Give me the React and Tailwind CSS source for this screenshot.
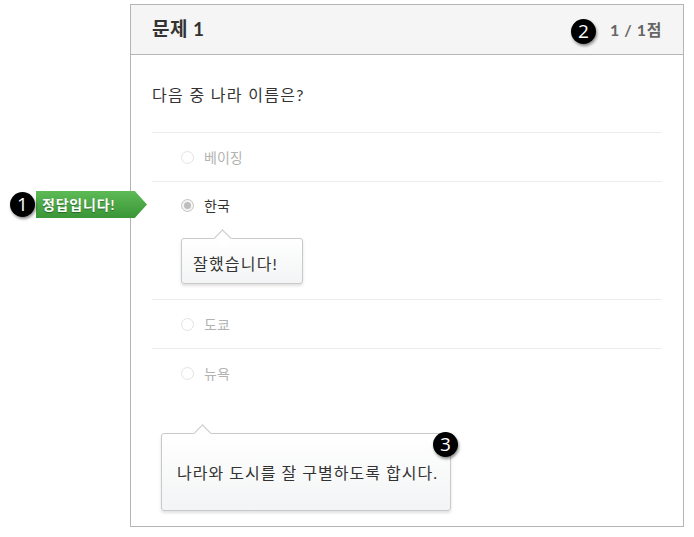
import React from 'react';

const FONT = "font-['Lato','Noto_Sans_CJK_KR',sans-serif]";

const Badge = ({ n, className }) => (
    <div
        className={`absolute flex h-[25px] w-[25px] items-center justify-center rounded-full bg-black text-[19px] leading-none text-white shadow-[1px_2px_3px_rgba(0,0,0,0.45)] font-['Open_Sans',sans-serif] ${className}`}
    >
        {n}
    </div>
);

const Radio = ({ checked }) => (
    <span
        className={`flex h-[13px] w-[13px] shrink-0 items-center justify-center rounded-full border ${
            checked ? 'border-[#c4c4c4] bg-[#f4f4f4]' : 'border-[#e3e3e3] bg-white'
        }`}
    >
        {checked && <span className="h-[7px] w-[7px] rounded-full bg-[#bdbdbd]" />}
    </span>
);

const Bubble = ({ children, className, arrowLeft }) => (
    <div
        className={`relative rounded-[3px] border border-[#c9c9c9] bg-gradient-to-b from-white to-[#f3f4f5] shadow-[0_2px_3px_rgba(0,0,0,0.12)] ${className}`}
    >
        {/* arrow */}
        <span
            className={`absolute top-[-7px] h-[13px] w-[13px] rotate-45 border-l border-t border-[#c9c9c9] bg-white ${arrowLeft}`}
        />
        {children}
    </div>
);

const Option = ({ label, muted }) => (
    <div className="flex h-[49px] items-center gap-[10px] border-t border-[#ececec] pl-[29px]">
        <Radio />
        <span className={`text-[14px] ${muted ? 'text-[#b3b3b3]' : 'text-[#333]'}`}>{label}</span>
    </div>
);

export default function App() {
    return (
        <div className={`relative h-[537px] w-[694px] bg-white ${FONT}`}>
            <div className="ml-[130px] mt-[4px] w-[554px] border border-[#b5b5b5]">
                {/* header */}
                <div className="flex h-[50px] items-center justify-between border-b border-[#b5b5b5] bg-[#f5f5f5] px-[21px]">
                    <h2 className="text-[19px] font-bold tracking-[0.5px] text-[#333]">문제 1</h2>
                    <span className="text-[16px] font-bold tracking-[0.6px] text-[#666]">1 / 1점</span>
                </div>

                {/* body */}
                <div className="px-[21px] pb-[15px]">
                    <p className="mb-[27px] pt-[30px] text-[16px] leading-[20px] tracking-[1.3px] text-[#333]">
                        다음 중 나라 이름은?
                    </p>

                    <Option label="베이징" muted />

                    <div className="flex flex-col border-t border-[#ececec] pb-[15px]">
                        <div className="flex h-[47px] items-center gap-[10px] pl-[29px]">
                            <Radio checked />
                            <span className="text-[14px] text-[#333]">한국</span>
                        </div>
                        <Bubble className="ml-[29px] mt-[9px] flex h-[46px] w-[122px] items-end pb-[7px] pl-[11px]" arrowLeft="left-[34px]">
                            <span className="text-[16px] tracking-[1.2px] text-[#333]">잘했습니다!</span>
                        </Bubble>
                    </div>

                    <Option label="도쿄" muted />
                    <Option label="뉴욕" muted />

                    <Bubble className="ml-[9px] mt-[36px] flex h-[78px] w-[290px] items-center pl-[15px]" arrowLeft="left-[34px]">
                        <span className="pt-[1px] text-[16px] tracking-[1px] text-[#333]">나라와 도시를 잘 구별하도록 합시다.</span>
                    </Bubble>
                </div>
            </div>

            {/* correct-answer label */}
            <div className="absolute left-[36px] top-[187px] flex h-[27px] w-[111px] items-center bg-gradient-to-b from-[#5dba55] to-[#3a9636] pl-[6px] [clip-path:polygon(0_0,89%_0,100%_50%,89%_100%,0_100%)]">
                <span className="text-[14px] font-bold tracking-[0.8px] text-white [text-shadow:0_1px_1px_rgba(0,0,0,0.35)]">정답입니다!</span>
            </div>

            <Badge n="1" className="left-[10px] top-[188px]" />
            <Badge n="2" className="left-[571px] top-[15px]" />
            <Badge n="3" className="left-[433px] top-[428px]" />
        </div>
    );
}
